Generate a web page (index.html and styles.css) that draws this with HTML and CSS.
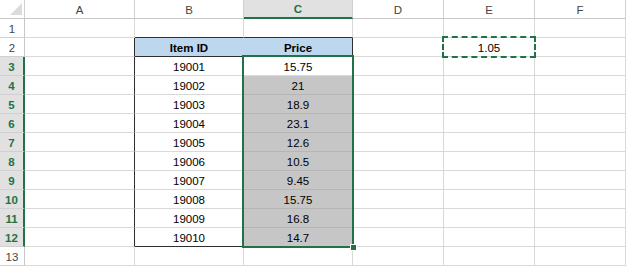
FILE: index.html
```html
<!DOCTYPE html>
<html lang="en">
<head>
    <meta charset="UTF-8">
    <title>Sheet1</title>
    <link rel="stylesheet" href="styles.css">
</head>
<body>
    <div class="sheet">
        <!-- column headers -->
        <div class="hd corner"><span class="tri"></span></div>
        <div class="hd">A</div>
        <div class="hd">B</div>
        <div class="hd col-on">C</div>
        <div class="hd">D</div>
        <div class="hd">E</div>
        <div class="hd">F</div>

        <!-- row 1 -->
        <div class="rh">1</div>
        <div class="c"></div>
        <div class="c t-top"></div>
        <div class="c t-top"></div>
        <div class="c"></div>
        <div class="c"></div>
        <div class="c"></div>

        <!-- row 2 -->
        <div class="rh">2</div>
        <div class="c t-left"></div>
        <div class="c th no-right">Item ID</div>
        <div class="c th t-right">Price</div>
        <div class="c"></div>
        <div class="c">1.05</div>
        <div class="c"></div>

        <!-- rows 3-12 -->
        <div class="rh row-on">3</div>
        <div class="c t-left"></div>
        <div class="c t-right">19001</div>
        <div class="c t-right">15.75</div>
        <div class="c"></div><div class="c"></div><div class="c"></div>

        <div class="rh row-on">4</div>
        <div class="c t-left"></div>
        <div class="c t-right">19002</div>
        <div class="c t-right on">21</div>
        <div class="c"></div><div class="c"></div><div class="c"></div>

        <div class="rh row-on">5</div>
        <div class="c t-left"></div>
        <div class="c t-right">19003</div>
        <div class="c t-right on">18.9</div>
        <div class="c"></div><div class="c"></div><div class="c"></div>

        <div class="rh row-on">6</div>
        <div class="c t-left"></div>
        <div class="c t-right">19004</div>
        <div class="c t-right on">23.1</div>
        <div class="c"></div><div class="c"></div><div class="c"></div>

        <div class="rh row-on">7</div>
        <div class="c t-left"></div>
        <div class="c t-right">19005</div>
        <div class="c t-right on">12.6</div>
        <div class="c"></div><div class="c"></div><div class="c"></div>

        <div class="rh row-on">8</div>
        <div class="c t-left"></div>
        <div class="c t-right">19006</div>
        <div class="c t-right on">10.5</div>
        <div class="c"></div><div class="c"></div><div class="c"></div>

        <div class="rh row-on">9</div>
        <div class="c t-left"></div>
        <div class="c t-right">19007</div>
        <div class="c t-right on">9.45</div>
        <div class="c"></div><div class="c"></div><div class="c"></div>

        <div class="rh row-on">10</div>
        <div class="c t-left"></div>
        <div class="c t-right">19008</div>
        <div class="c t-right on">15.75</div>
        <div class="c"></div><div class="c"></div><div class="c"></div>

        <div class="rh row-on">11</div>
        <div class="c t-left"></div>
        <div class="c t-right">19009</div>
        <div class="c t-right on">16.8</div>
        <div class="c"></div><div class="c"></div><div class="c"></div>

        <div class="rh row-on">12</div>
        <div class="c t-left"></div>
        <div class="c t-right t-bottom">19010</div>
        <div class="c t-right t-bottom on">14.7</div>
        <div class="c"></div><div class="c"></div><div class="c"></div>

        <!-- row 13 -->
        <div class="rh">13</div>
        <div class="c"></div><div class="c"></div><div class="c"></div>
        <div class="c"></div><div class="c"></div><div class="c"></div>

        <!-- selection C3:C12 and copy marquee on E2 -->
        <div class="sel"><span class="handle"></span></div>
        <div class="marquee"></div>
    </div>
</body>
</html>
```

FILE: styles.css
```css
:root {
    --grid: #d9d9d9;
    --hd-line: #d0d0d0;
    --green: #217346;
    --table-line: #2f2f2f;
    --header-blue: #bdd7ee;
    --sel-fill: #c6c6c6;
    --hd-on: #e1e1e1;
}
body {
    margin: 0;
    background: #fff;
    font-family: "Liberation Sans", Arial, sans-serif;
    font-size: 11.5px;
    color: #000;
}
.sheet {
    position: relative;
    display: grid;
    grid-template-columns: 25px 110px 109px 109px 91px 91px 91px;
    grid-template-rows: repeat(14, 19px);
    width: 626px;
}
.hd, .rh, .c {
    box-sizing: border-box;
    border-right: 1px solid var(--grid);
    border-bottom: 1px solid var(--grid);
    display: flex;
    align-items: center;
    justify-content: center;
    line-height: 18px;
    padding-top: 1px;
    white-space: nowrap;
}
.hd {
    color: #444;
    border-right-color: var(--hd-line);
    border-bottom-color: #c8c8c8;
}
.rh {
    color: #444;
    border-right-color: #c8c8c8;
    border-bottom-color: var(--hd-line);
}
.corner {
    position: relative;
}
.tri {
    position: absolute;
    right: 2px;
    bottom: 3px;
    width: 0;
    height: 0;
    border-left: 12px solid transparent;
    border-bottom: 12px solid #dcdcdc;
}
.col-on {
    background: var(--hd-on);
    color: var(--green);
    font-weight: bold;
    border-bottom: 2px solid var(--green);
}
.row-on {
    background: var(--hd-on);
    color: var(--green);
    font-weight: bold;
    border-right: 2px solid var(--green);
}
.th {
    background: var(--header-blue);
    font-weight: bold;
    border-bottom-color: var(--table-line);
}
.no-right {
    border-right-color: var(--header-blue);
}
.t-top {
    border-bottom-color: var(--table-line);
}
.t-left {
    border-right-color: var(--table-line);
}
.t-right {
    border-right-color: var(--table-line);
}
.t-bottom {
    border-bottom-color: var(--table-line);
}
.on {
    background: var(--sel-fill);
    border-bottom-color: #b6b6b6;
}
/* absolutely placed grid children use their grid area as containing block */
.sel {
    position: absolute;
    grid-column: 4 / 5;
    grid-row: 4 / 14;
    inset: -2px -1px -1px -2px;
    border: 2px solid var(--green);
    pointer-events: none;
}
.handle {
    position: absolute;
    right: -5px;
    bottom: -5px;
    width: 5px;
    height: 5px;
    background: var(--green);
    border: 1px solid #fff;
}
.marquee {
    position: absolute;
    grid-column: 6 / 7;
    grid-row: 3 / 4;
    inset: -2px -1px -1px -2px;
    border: 2px dashed var(--green);
    pointer-events: none;
}
```
